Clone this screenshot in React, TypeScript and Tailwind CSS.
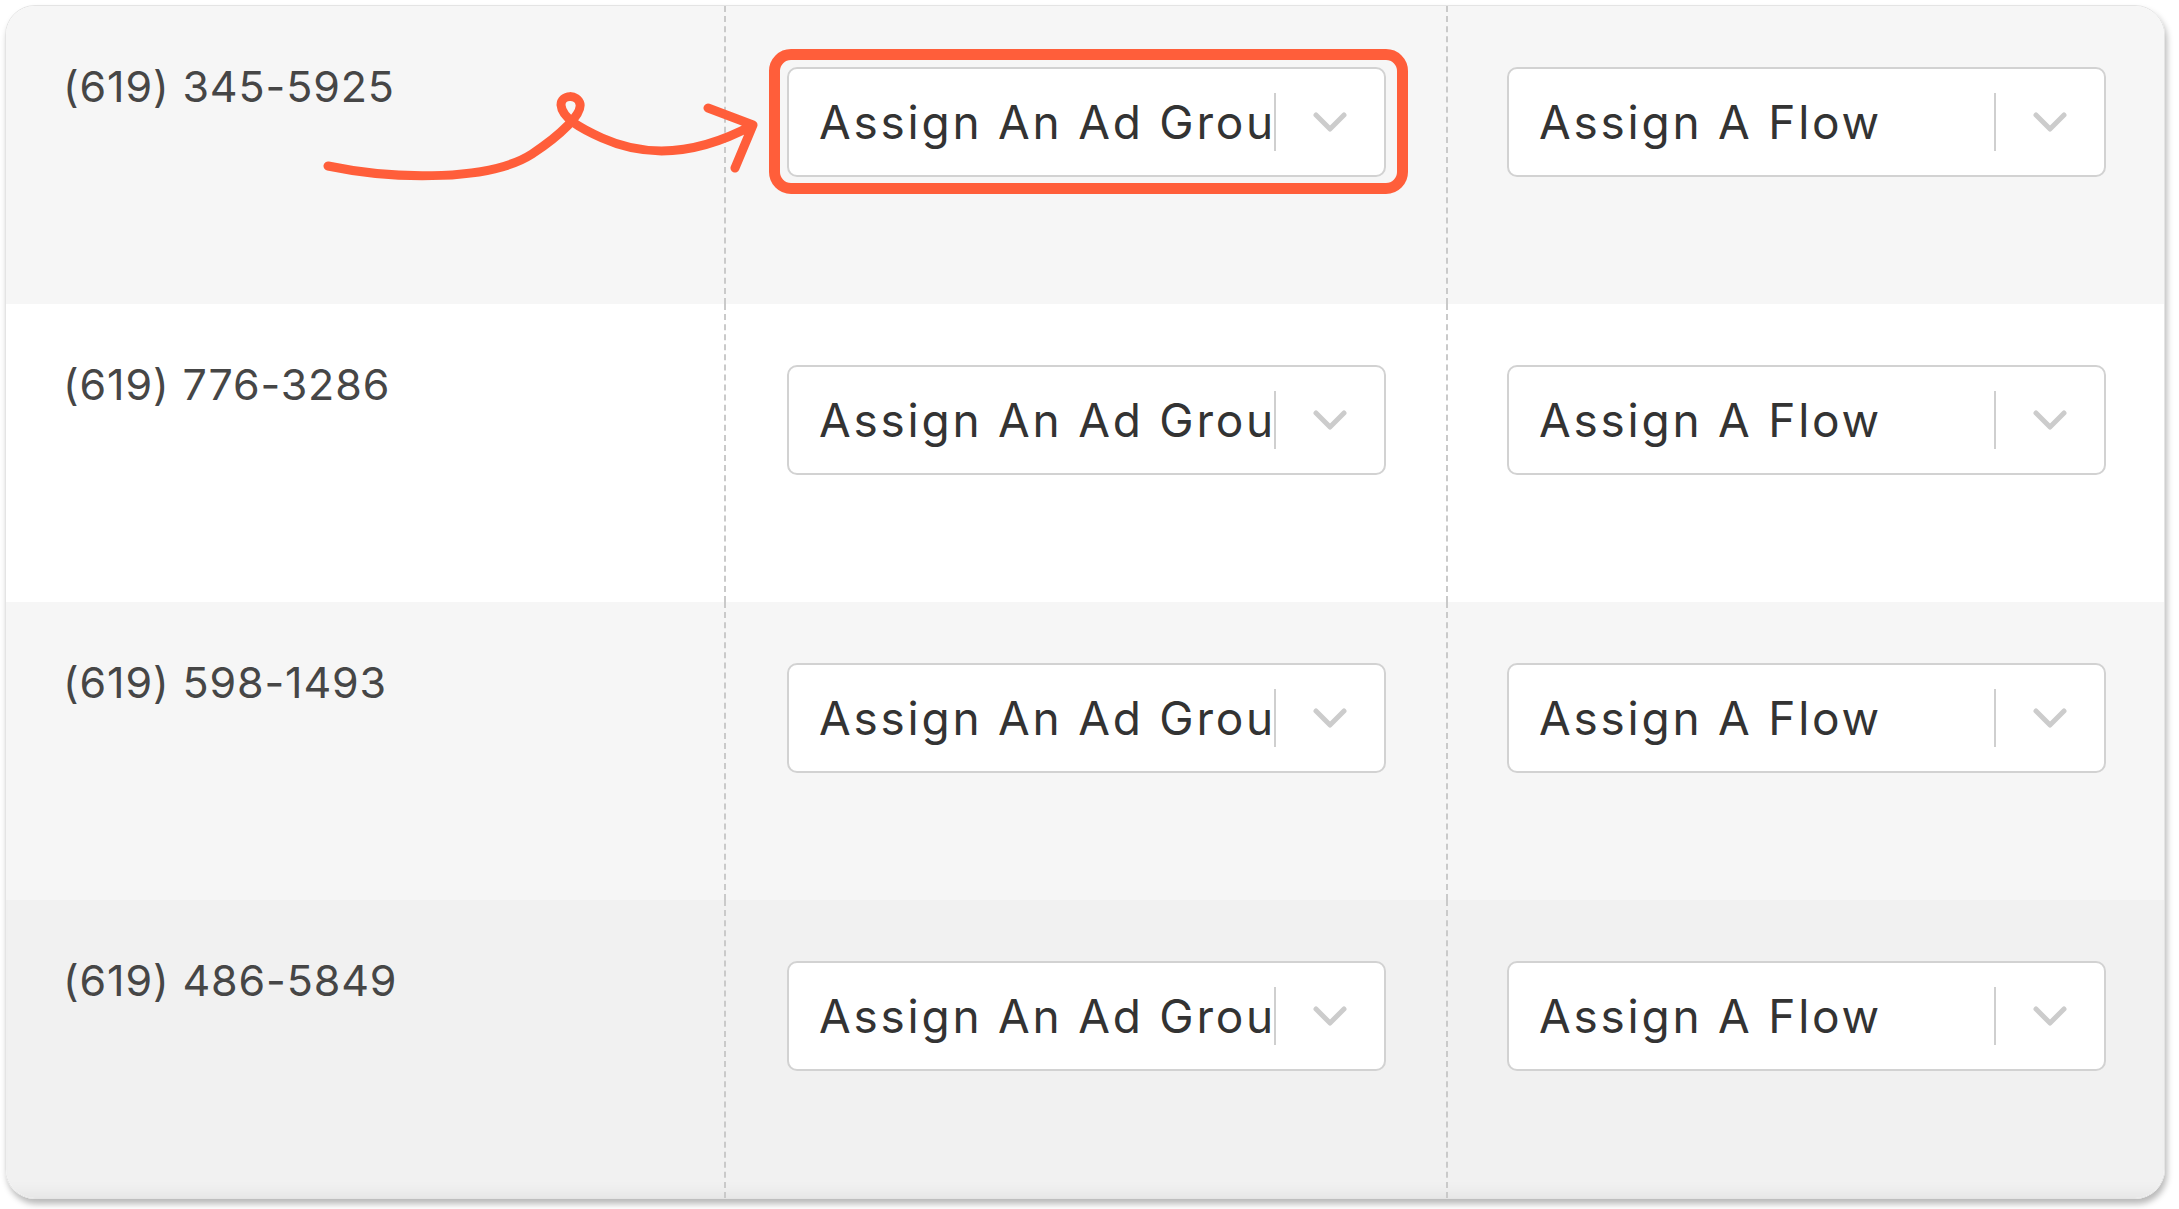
import React from 'react';

const rows = [
  { phone: '(619) 345-5925', bg: 'bg-[#f6f6f6]', highlight: true },
  { phone: '(619) 776-3286', bg: 'bg-white', highlight: false },
  { phone: '(619) 598-1493', bg: 'bg-[#f6f6f6]', highlight: false },
  { phone: '(619) 486-5849', bg: 'bg-[#f1f1f1] shadow-[inset_0_-14px_16px_-10px_rgba(0,0,0,0.06)]', highlight: false },
];

const Chevron = () => (
  <svg width="34" height="20" viewBox="0 0 34 20" fill="none">
    <polyline points="3,3 17,17 31,3" stroke="#cccccc" strokeWidth="5" strokeLinecap="round" strokeLinejoin="round" />
  </svg>
);

const SelectBox = ({ label, highlight }: { label: string; highlight?: boolean }) => (
  <div className="relative w-[599px]">
    {highlight && (
      <div className="pointer-events-none absolute -left-[18px] -right-[22px] -top-[18px] -bottom-[17px] rounded-[22px] border-[11px] border-[#ff5e3a]" />
    )}
    <div className="flex h-[110px] items-center rounded-[10px] border-2 border-[#d2d2d2] bg-white">
      <div className="flex-1 overflow-hidden whitespace-nowrap pl-[30px] text-[46px] tracking-[0.06em] text-[#333333]">
        {label}
      </div>
      <div className="h-[58px] w-[2px] bg-[#cfcfcf]" />
      <div className="flex w-[108px] items-center justify-center">
        <Chevron />
      </div>
    </div>
  </div>
);

const App = () => {
  return (
    <div className="relative min-h-screen bg-white p-[5px] font-['Inter',sans-serif]">
      <div className="w-[2160px] overflow-hidden rounded-[30px] border border-[#e4e4e4] shadow-[2px_5px_6px_rgba(0,0,0,0.28)]">
        {rows.map((row) => (
          <div key={row.phone} className={`grid h-[298px] grid-cols-[718px_722px_1fr] ${row.bg}`}>
            <div className="pl-[57px] pt-[48px] text-[43px] tracking-[0.02em] text-[#464646]">{row.phone}</div>
            <div className="border-l-2 border-dashed border-[#cacaca] pl-[61px] pt-[61px]">
              <SelectBox label="Assign An Ad Group" highlight={row.highlight} />
            </div>
            <div className="border-l-2 border-dashed border-[#cacaca] pl-[59px] pt-[61px]">
              <SelectBox label="Assign A Flow" />
            </div>
          </div>
        ))}
      </div>

      <svg className="pointer-events-none absolute left-0 top-0" width="2179" height="1209" viewBox="0 0 2179 1209" fill="none">
        <path
          d="M328,166 C400,181 492,180 532,154 C562,134 582,114 580,104 C578,94 561,94 561,105 C562,118 580,128 602,138 C642,156 692,158 753,125 M708,108 L753,125 L735,168"
          stroke="#ff5e3a"
          strokeWidth="9"
          strokeLinecap="round"
          strokeLinejoin="round"
        />
      </svg>
    </div>
  );
};

export default App;
